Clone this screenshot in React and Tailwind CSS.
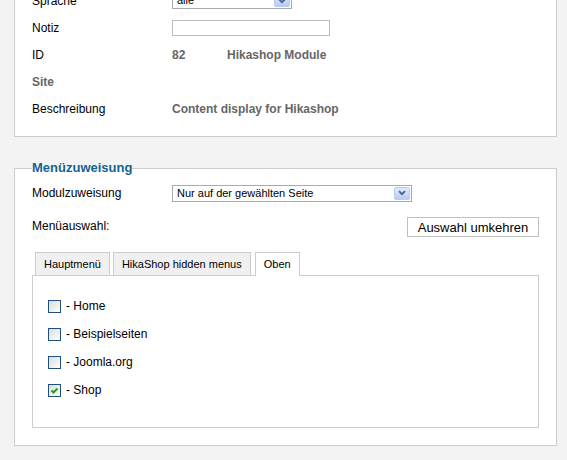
import React from "react";

function XPSelect({ w, text }) {
  return (
    <div className={`flex h-[17px] items-center justify-between border border-[#a5acb2] bg-white pl-[4px] pr-[1px] ${w}`}>
      <span className="text-[11px] leading-none text-black">{text}</span>
      <span className="flex h-[13px] w-[16px] items-center justify-center rounded-[2px] border border-[#b8cbf2] bg-gradient-to-b from-[#e1eafe] to-[#b6cbf6]">
        <svg width="8" height="6" viewBox="0 0 8 6">
          <path d="M1 1.2 L4 4.2 L7 1.2" stroke="#4d6185" strokeWidth="1.8" fill="none" />
        </svg>
      </span>
    </div>
  );
}

function Check({ checked, label }) {
  return (
    <div className="flex h-[28px] items-center">
      <span className="flex h-[13px] w-[13px] items-center justify-center border border-[#1c5180] bg-gradient-to-br from-[#dcdcd7] to-white">
        {checked && (
          <svg width="9" height="9" viewBox="0 0 9 9">
            <path d="M1.5 4.5 L3.5 6.5 L7.5 2.5" stroke="#21a121" strokeWidth="2" fill="none" />
          </svg>
        )}
      </span>
      <span className="ml-[5px] text-[12px] leading-none text-black">- {label}</span>
    </div>
  );
}

export default function App() {
  return (
    <div className="h-[460px] w-[567px] overflow-hidden bg-[#f3f3f3] pl-[14px] pr-[10px] font-['Liberation_Sans',Arial,sans-serif]">
      <div className="-mt-[14px] border border-[#cccccc] bg-white pb-[14px] pl-[17px] pr-[17px]">
        <div className="flex h-[27px] items-center">
          <span className="w-[140px] text-[12px] text-black">Sprache</span>
          <XPSelect w="w-[120px]" text="alle" />
        </div>
        <div className="flex h-[27px] items-center">
          <span className="w-[140px] text-[12px] text-black">Notiz</span>
          <div className="h-[16px] w-[158px] border border-[#bbbbbb] bg-white" />
        </div>
        <div className="flex h-[27px] items-center">
          <span className="w-[140px] text-[12px] text-black">ID</span>
          <span className="w-[55px] text-[12px] font-bold text-[#666666]">82</span>
          <span className="text-[12px] font-bold text-[#666666]">Hikashop Module</span>
        </div>
        <div className="flex h-[27px] items-center">
          <span className="w-[140px] text-[12px] font-bold text-[#666666]">Site</span>
        </div>
        <div className="flex h-[27px] items-center">
          <span className="w-[140px] text-[12px] text-black">Beschreibung</span>
          <span className="text-[12px] font-bold text-[#666666]">Content display for Hikashop</span>
        </div>
      </div>

      <fieldset className="mt-[23px] border border-[#cccccc] bg-white px-[17px] pb-[17px] pt-[8px]">
        <legend className="text-[13px] font-bold leading-[16px] text-[#146295]">Menüzuweisung</legend>
        <div className="flex h-[18px] items-center">
          <span className="w-[140px] text-[12px] text-black">Modulzuweisung</span>
          <XPSelect w="w-[240px]" text="Nur auf der gewählten Seite" />
        </div>
        <div className="mt-[15px] flex h-[20px] items-center justify-between">
          <span className="mb-[3px] text-[12px] text-black">Menüauswahl:</span>
          <button className="h-[20px] w-[132px] border border-[#c0c0c0] bg-white text-[13px] leading-none text-black">
            Auswahl umkehren
          </button>
        </div>
        <div className="mt-[15px] flex gap-[3px] pl-[3px]">
          <div className="flex h-[23px] items-center border border-b-0 border-[#cccccc] bg-[#f0f0f0] px-[8px] text-[11px] text-black">Hauptmenü</div>
          <div className="flex h-[23px] items-center border border-b-0 border-[#cccccc] bg-[#f0f0f0] px-[8px] text-[11px] text-black">HikaShop hidden menus</div>
          <div className="relative z-10 ml-px -mb-px flex h-[24px] items-center border border-b-0 border-[#cccccc] bg-white px-[8px] text-[11px] text-black">Oben</div>
        </div>
        <div className="h-[153px] border border-[#cccccc] bg-white pl-[15px] pt-[16px]">
          <Check label="Home" />
          <Check label="Beispielseiten" />
          <Check label="Joomla.org" />
          <Check checked label="Shop" />
        </div>
      </fieldset>
    </div>
  );
}
